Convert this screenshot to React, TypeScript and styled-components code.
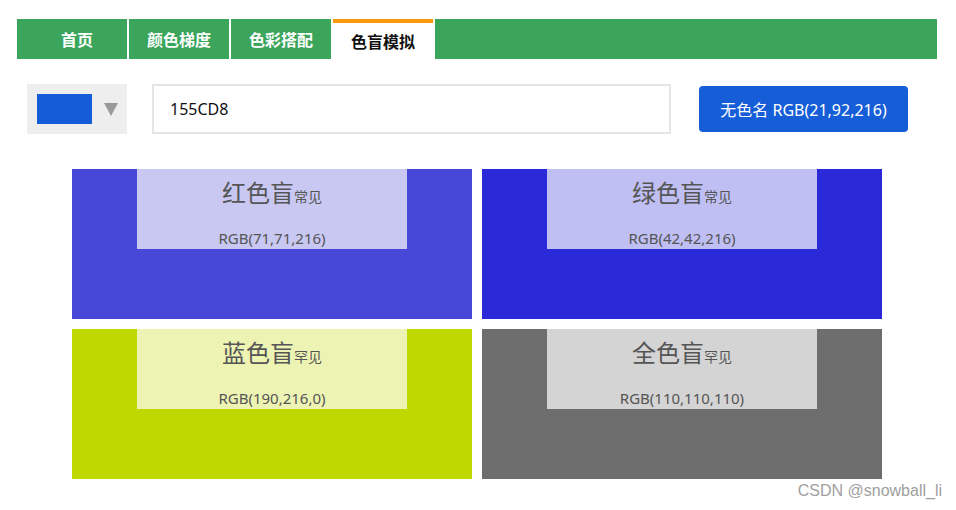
import React from "react";
import styled, { createGlobalStyle, css } from "styled-components";

const Global = createGlobalStyle`
  html, body { margin: 0; padding: 0; background: #fff; }
  body { font-family: "Noto Sans", "Noto Sans CJK SC", sans-serif; width: 956px; height: 510px; overflow: hidden; position: relative; }
`;

const Page = styled.div`
  padding: 19px 19px 0 17px;
`;

const Nav = styled.nav`
  display: flex;
  height: 40px;
  background: #3aa55b;
  padding-left: 10px;
`;

const Tab = styled.div<{ $active?: boolean }>`
  width: 100px;
  height: 40px;
  box-sizing: border-box;
  margin-right: 2px;
  display: flex;
  align-items: center;
  justify-content: center;
  font-family: "Noto Sans CJK SC", sans-serif;
  font-weight: 700;
  font-size: 16px;
  color: #fff;
  position: relative;
  &::after {
    content: "";
    position: absolute;
    right: -2px;
    top: 0;
    width: 2px;
    height: 100%;
    background: #fff;
  }
  ${(p) =>
    p.$active &&
    css`
      background: #fff;
      color: #111;
      border-top: 4px solid #f89a0c;
      &::after { top: -4px; height: 40px; }
    `}
`;

const Controls = styled.div`
  display: flex;
  align-items: center;
  padding-left: 10px;
  margin-top: 25px;
  height: 50px;
`;

const Picker = styled.div`
  width: 100px;
  height: 50px;
  background: #eeeeee;
  display: flex;
  align-items: center;
  padding-left: 10px;
  box-sizing: border-box;
  gap: 12px;
`;

const Swatch = styled.div<{ $color: string }>`
  width: 55px;
  height: 30px;
  background: ${(p) => p.$color};
`;

const Arrow = styled.div`
  width: 0;
  height: 0;
  border-left: 7.5px solid transparent;
  border-right: 7.5px solid transparent;
  border-top: 13px solid #999;
  margin-top: 1px;
`;

const Input = styled.input`
  margin-left: 25px;
  width: 519px;
  height: 50px;
  box-sizing: border-box;
  border: 2px solid #e5e5e5;
  padding: 0 16px;
  font-family: "Noto Sans", "Noto Sans CJK SC", sans-serif;
  font-size: 16px;
  color: #111;
  outline: none;
`;

const NameButton = styled.button`
  margin-left: 28px;
  width: 209px;
  height: 46px;
  border: none;
  border-radius: 4px;
  background: #165dd8;
  color: #fff;
  font-family: "Noto Sans", "Noto Sans CJK SC", sans-serif;
  font-size: 16px;
  padding: 0;
`;

const Grid = styled.div`
  display: grid;
  grid-template-columns: 400px 400px;
  gap: 10px;
  width: 810px;
  margin: 35px auto 0;
`;

const Card = styled.div<{ $color: string }>`
  height: 150px;
  background: ${(p) => p.$color};
  display: flex;
  justify-content: center;
`;

const Label = styled.div`
  width: 270px;
  height: 80px;
  background: rgba(255, 255, 255, 0.7);
  display: flex;
  flex-direction: column;
  align-items: center;
  color: #555;
  font-family: "Noto Sans", "Noto Sans CJK SC", sans-serif;
`;

const Title = styled.div`
  margin-top: 7px;
  line-height: 32px;
  font-size: 24px;
  font-family: "Noto Sans CJK SC", sans-serif;
`;

const Small = styled.span`
  font-size: 14px;
`;

const Rgb = styled.div`
  margin-top: 16px;
  font-size: 15px;
  line-height: 20px;
`;

const Watermark = styled.div`
  position: absolute;
  right: 14px;
  top: 482px;
  font-family: "Liberation Sans", Arial, sans-serif;
  font-size: 16px;
  color: #a0a0a0;
`;

const tabs = ["首页", "颜色梯度", "色彩搭配", "色盲模拟"];

const cards = [
  { name: "红色盲", tag: "常见", rgb: [71, 71, 216] },
  { name: "绿色盲", tag: "常见", rgb: [42, 42, 216] },
  { name: "蓝色盲", tag: "罕见", rgb: [190, 216, 0] },
  { name: "全色盲", tag: "罕见", rgb: [110, 110, 110] },
];

export default function App() {
  return (
    <>
      <Global />
      <Page>
        <Nav>
          {tabs.map((t, i) => (
            <Tab key={t} $active={i === 3}>
              {t}
            </Tab>
          ))}
        </Nav>
        <Controls>
          <Picker>
            <Swatch $color="#155cd8" />
            <Arrow />
          </Picker>
          <Input defaultValue="155CD8" />
          <NameButton>无色名 RGB(21,92,216)</NameButton>
        </Controls>
        <Grid>
          {cards.map((c) => {
            const rgb = `RGB(${c.rgb.join(",")})`;
            return (
              <Card key={c.name} $color={`rgb(${c.rgb.join(",")})`}>
                <Label>
                  <Title>
                    {c.name}
                    <Small>{c.tag}</Small>
                  </Title>
                  <Rgb>{rgb}</Rgb>
                </Label>
              </Card>
            );
          })}
        </Grid>
      </Page>
      <Watermark>CSDN @snowball_li</Watermark>
    </>
  );
}
